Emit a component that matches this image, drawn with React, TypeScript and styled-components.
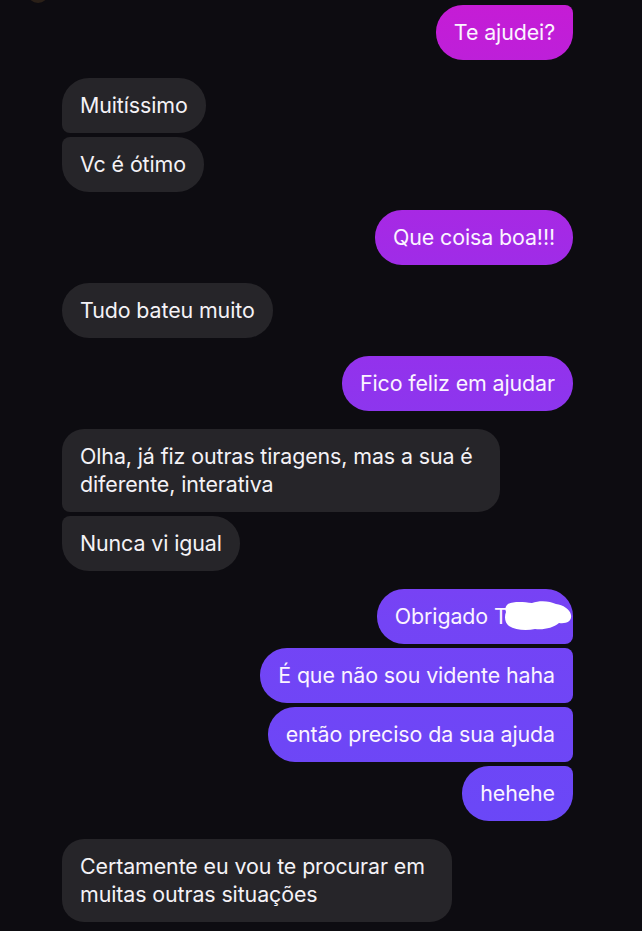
import React from "react";
import styled, { createGlobalStyle, css } from "styled-components";

const Global = createGlobalStyle`
  html, body { margin: 0; padding: 0; background: #0d0c11; }
  body { font-family: Inter, "Noto Sans", "Liberation Sans", sans-serif; -webkit-font-smoothing: antialiased; }
`;

const Screen = styled.div`
  width: 642px;
  height: 931px;
  background: #0d0c11;
  position: relative;
  overflow: hidden;
  box-sizing: border-box;
  padding: 5px 69px 0 62px;
  display: flex;
  flex-direction: column;
  gap: 18px;
`;

const Avatar = styled.div`
  position: absolute;
  left: 28px;
  top: -15px;
  width: 20px;
  height: 18px;
  border-radius: 50%;
  background: #2a2018;
`;

const Group = styled.div<{ $me?: boolean }>`
  display: flex;
  flex-direction: column;
  gap: 4px;
  align-items: ${(p) => (p.$me ? "flex-end" : "flex-start")};
`;

type Pos = "single" | "first" | "middle" | "last";

const radius = (me: boolean, pos: Pos, big: number) => {
  const s = 8;
  const top = pos === "single" || pos === "first" ? big : s;
  const bottom = pos === "single" || pos === "last" ? big : s;
  return me
    ? `${big}px ${top}px ${bottom}px ${big}px`
    : `${top}px ${big}px ${big}px ${bottom}px`;
};

const Bubble = styled.div<{ $me?: boolean; $pos: Pos; $multi?: boolean; $maxw?: number }>`
  position: relative;
  box-sizing: border-box;
  padding: 13px 18px 14px 18px;
  font-size: 21.4px;
  line-height: 28px;
  letter-spacing: -0.1px;
  color: #f4f2f6;
  max-width: ${(p) => p.$maxw ?? 440}px;
  border-radius: ${(p) => radius(!!p.$me, p.$pos, p.$multi ? 22 : 27)};
  ${(p) =>
    p.$me
      ? css`
          background: linear-gradient(to bottom, #c61cd5 0px, #9a2eea 300px, #7444f5 620px, #6549f8 931px);
          background-attachment: fixed;
          color: #fbf4ff;
        `
      : css`
          background: #262529;
        `}
`;

const Blob = styled.svg`
  position: absolute;
  right: 1px;
  top: 10px;
  width: 70px;
  height: 33px;
`;

export default function App() {
  return (
    <>
      <Global />
      <Screen>
        <Avatar />
        <Group $me>
          <Bubble $me $pos="last">Te ajudei?</Bubble>
        </Group>
        <Group>
          <Bubble $pos="first">Muitíssimo</Bubble>
          <Bubble $pos="last">Vc é ótimo</Bubble>
        </Group>
        <Group $me>
          <Bubble $me $pos="single">Que coisa boa!!!</Bubble>
        </Group>
        <Group>
          <Bubble $pos="single">Tudo bateu muito</Bubble>
        </Group>
        <Group $me>
          <Bubble $me $pos="single">Fico feliz em ajudar</Bubble>
        </Group>
        <Group>
          <Bubble $pos="first" $multi $maxw={438}>
            Olha, já fiz outras tiragens, mas a sua é diferente, interativa
          </Bubble>
          <Bubble $pos="last">Nunca vi igual</Bubble>
        </Group>
        <Group $me>
          <Bubble $me $pos="first">
            Obrigado T&nbsp;&nbsp;&nbsp;&nbsp;&nbsp;&nbsp;&nbsp;&nbsp;
            <Blob viewBox="0 0 70 33" preserveAspectRatio="none">
              <path
                d="M6 5 C12 2 22 3 30 4 C38 1 48 2 54 5 C61 6 68 10 69 16 C70 22 65 25 57 24 C51 29 42 31 33 30 C24 32 13 31 7 27 C3 24 2 18 4 13 C3 10 3 8 6 5 Z"
                fill="#ffffff"
              />
            </Blob>
          </Bubble>
          <Bubble $me $pos="middle">É que não sou vidente haha</Bubble>
          <Bubble $me $pos="middle">então preciso da sua ajuda</Bubble>
          <Bubble $me $pos="last">hehehe</Bubble>
        </Group>
        <Group>
          <Bubble $pos="single" $multi $maxw={390}>
            Certamente eu vou te procurar em muitas outras situações
          </Bubble>
        </Group>
      </Screen>
    </>
  );
}
